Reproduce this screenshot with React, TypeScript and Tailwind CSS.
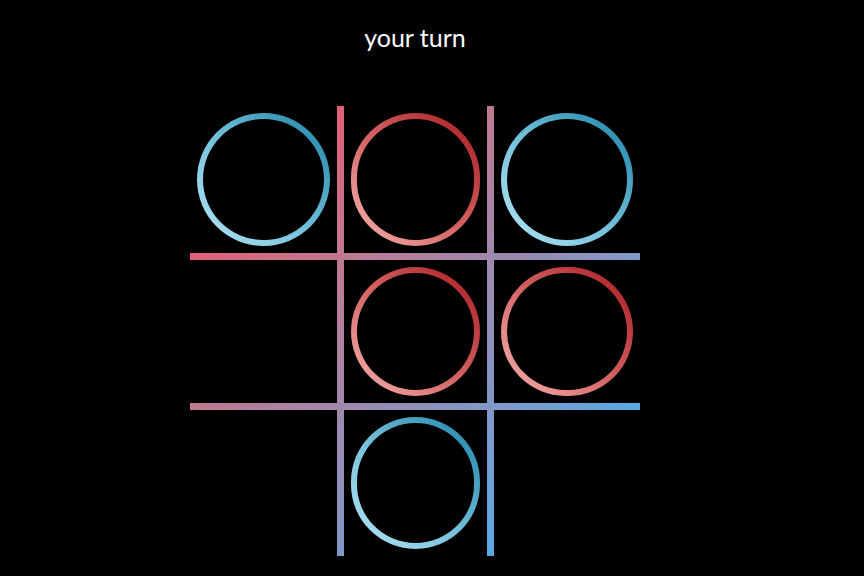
import React from 'react';

type Mark = 'blue' | 'red' | null;

const board: Mark[] = ['blue', 'red', 'blue', null, 'red', 'red', null, 'blue', null];

const Ring = ({ mark }: { mark: Mark }) => {
  if (!mark) return null;
  const ring =
    mark === 'blue'
      ? 'bg-[linear-gradient(45deg,#b4e6f6_0%,#78c2dc_45%,#1a82a6_100%)]'
      : 'bg-[linear-gradient(45deg,#f8b6b2_0%,#d66868_45%,#a81820_100%)]';
  return (
    <div className={`w-[90%] h-[90%] rounded-full p-[6px] ${ring}`}>
      <div className="w-full h-full rounded-full bg-black" />
    </div>
  );
};

export default function App() {
  return (
    <div className="min-h-screen bg-black font-['Lato','Open_Sans',sans-serif]">
      <div className="w-[830px] flex flex-col items-center pt-[22px]">
        <p className="text-white text-[25px] leading-[30px]">your turn</p>

        {/* Board */}
        <div className="mt-[54px] w-[450px] h-[450px] grid grid-cols-[147px_143px_146px] grid-rows-[147px_143px_146px] gap-[7px] bg-[linear-gradient(135deg,#f45266_0%,#e06078_17%,#c07890_33%,#8098c8_67%,#58a8e0_83%,#46b0ec_100%)]">
          {board.map((mark, i) => (
            <div key={i} className="bg-black flex items-center justify-center">
              <Ring mark={mark} />
            </div>
          ))}
        </div>
      </div>
    </div>
  );
}
